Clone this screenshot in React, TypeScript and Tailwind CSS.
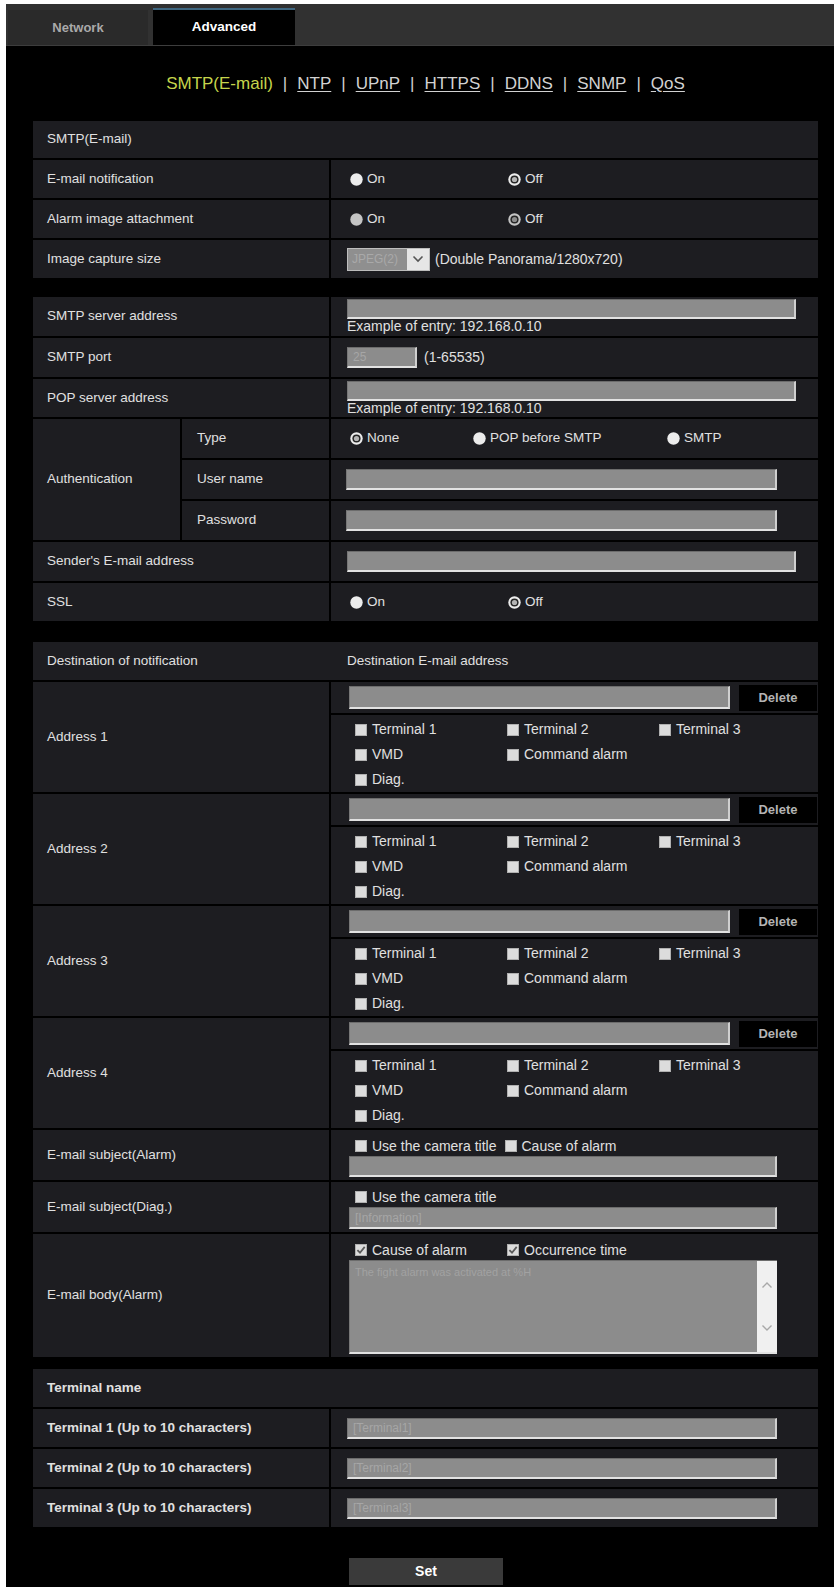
import React from "react";

const ROW = "bg-[#1d1d21]";

function Radio({ checked = false, dim = false }: { checked?: boolean; dim?: boolean }) {
  return (
    <svg width="13" height="13" viewBox="0 0 13 13" className="shrink-0">
      <circle cx="6.5" cy="6.5" r="6.2" fill={dim ? "#c4c4c4" : "#ececec"} />
      {checked && (
        <>
          <circle cx="6.5" cy="6.5" r="4.1" fill="#262626" />
          <circle cx="6.5" cy="6.5" r="2.6" fill={dim ? "#8c8c8c" : "#b4b4b4"} />
        </>
      )}
    </svg>
  );
}

function Check({ checked = false }: { checked?: boolean }) {
  return (
    <svg width="12" height="12" viewBox="0 0 12 12" className="shrink-0">
      <rect x="0.5" y="0.5" width="11" height="11" fill="#dcdcdc" stroke="#b0b0b0" />
      {checked && <path d="M2.4 6.1 L5 8.7 L9.7 2.9" fill="none" stroke="#5a5a5a" strokeWidth="1.8" />}
    </svg>
  );
}

function Field({ w, h = "h-[21px]", text }: { w: string; h?: string; text?: string }) {
  return (
    <div
      className={`${w} ${h} shrink-0 bg-[#8c8c8c] border-t border-l border-t-[#6c6c6c] border-l-[#777777] border-b-2 border-b-[#e2e2e2] border-r-2 border-r-[#cfcfcf] flex items-center pl-[5px] text-[12px] text-[#a6a6a6] overflow-hidden whitespace-nowrap`}
    >
      {text}
    </div>
  );
}

function RadioItem({ label, checked, dim, w }: { label: string; checked?: boolean; dim?: boolean; w?: string }) {
  return (
    <div className={`flex items-center gap-[4px] ${w ?? ""}`}>
      <Radio checked={checked} dim={dim} />
      <span className="text-[13.5px] text-[#e0e0e0]">{label}</span>
    </div>
  );
}

function CheckItem({ label, checked, w }: { label: string; checked?: boolean; w?: string }) {
  return (
    <div className={`flex items-center gap-[5px] ${w ?? ""}`}>
      <Check checked={checked} />
      <span className="text-[14px] text-[#e0e0e0] whitespace-nowrap">{label}</span>
    </div>
  );
}

function Row({
  label,
  h,
  bold,
  children,
  valueClass = "",
}: {
  label: string;
  h: string;
  bold?: boolean;
  children?: React.ReactNode;
  valueClass?: string;
}) {
  return (
    <div className={`flex gap-[2px] ${h}`}>
      <div
        className={`w-[296px] shrink-0 ${ROW} flex items-center pl-[14px] text-[#e0e0e0] ${bold ? "font-bold text-[13.5px]" : "text-[13.5px]"}`}
      >
        {label}
      </div>
      <div className={`flex-1 ${ROW} pl-[16px] ${valueClass}`}>{children}</div>
    </div>
  );
}

function Header({ left, right, h = "h-[37px]", bold }: { left: string; right?: string; h?: string; bold?: boolean }) {
  return (
    <div className={`flex ${h} ${ROW} items-center text-[13.5px] text-[#e0e0e0] ${bold ? "font-bold" : ""}`}>
      <div className="w-[298px] shrink-0 pl-[14px]">{left}</div>
      {right && <div className="pl-[16px]">{right}</div>}
    </div>
  );
}

function AddressBlock({ n }: { n: number }) {
  return (
    <div className="flex gap-[2px] h-[110px]">
      <div className={`w-[296px] shrink-0 ${ROW} flex items-center pl-[14px] text-[13.5px] text-[#e0e0e0]`}>
        Address {n}
      </div>
      <div className="flex-1 flex flex-col gap-[2px]">
        <div className={`h-[32px] ${ROW} flex items-center pl-[18px]`}>
          <Field w="w-[381px]" h="h-[23px]" />
          <div className="ml-[9px] w-[78px] h-[26px] bg-black flex items-center justify-center text-[13px] font-bold text-[#b4b4b4]">
            Delete
          </div>
        </div>
        <div className={`flex-1 ${ROW} pl-[24px] pt-[2px] flex flex-col`}>
          <div className="h-[25px] flex items-center">
            <CheckItem label="Terminal 1" w="w-[152px]" />
            <CheckItem label="Terminal 2" w="w-[152px]" />
            <CheckItem label="Terminal 3" />
          </div>
          <div className="h-[25px] flex items-center">
            <CheckItem label="VMD" w="w-[152px]" />
            <CheckItem label="Command alarm" />
          </div>
          <div className="h-[25px] flex items-center">
            <CheckItem label="Diag." />
          </div>
        </div>
      </div>
    </div>
  );
}

function Sep() {
  return <span className="mx-[10px] text-[#d0d0d0]">|</span>;
}

export default function App() {
  return (
    <div className="w-[834px] h-[1587px] overflow-hidden bg-white pt-[4px] pl-[6px] font-['Liberation_Sans',Arial,sans-serif]">
      <div className="h-full bg-black">
        {/* tab strip */}
        <div className="h-[42px] bg-[#313131] flex items-end border-b border-b-[#3d3d3d]">
          <div className="ml-[2px] w-[140px] h-[35px] bg-[#2a2a2a] flex items-center justify-center text-[13px] font-bold text-[#a9a9a9]">
            Network
          </div>
          <div className="ml-[5px] w-[142px] h-[37px] bg-black border-t-2 border-t-[#3e6680] flex items-center justify-center text-[13.5px] font-bold text-white">
            Advanced
          </div>
        </div>

        {/* sub navigation */}
        <div className="ml-[27px] w-[785px] h-[75px] flex items-center justify-center text-[17px] text-[#d2d2d2]">
          <span className="text-[#c6d54c]">SMTP(E-mail)</span>
          <Sep />
          <span className="underline underline-offset-2">NTP</span>
          <Sep />
          <span className="underline underline-offset-2">UPnP</span>
          <Sep />
          <span className="underline underline-offset-2">HTTPS</span>
          <Sep />
          <span className="underline underline-offset-2">DDNS</span>
          <Sep />
          <span className="underline underline-offset-2">SNMP</span>
          <Sep />
          <span className="underline underline-offset-2">QoS</span>
        </div>

        <div className="ml-[27px] w-[785px]">
          {/* SMTP basics */}
          <div className="flex flex-col gap-[2px]">
            <Header left="SMTP(E-mail)" />
            <Row label="E-mail notification" h="h-[38px]" valueClass="flex items-center pl-[19px]">
              <RadioItem label="On" w="w-[158px]" />
              <RadioItem label="Off" checked />
            </Row>
            <Row label="Alarm image attachment" h="h-[38px]" valueClass="flex items-center pl-[19px]">
              <RadioItem label="On" w="w-[158px]" dim />
              <RadioItem label="Off" checked dim />
            </Row>
            <Row label="Image capture size" h="h-[38px]" valueClass="flex items-center pl-[15px]">
              <div className="flex h-[23px] border border-[#bdbdbd]">
                <div className="w-[59px] bg-[#8f8f8f] flex items-center pl-[4px] text-[12px] text-[#a9a9a9]">JPEG(2)</div>
                <div className="w-[22px] bg-[#e6e6e6] flex items-center justify-center">
                  <svg width="12" height="8" viewBox="0 0 12 8">
                    <path d="M1.5 1.5 L6 6 L10.5 1.5" fill="none" stroke="#555" strokeWidth="1.6" />
                  </svg>
                </div>
              </div>
              <span className="ml-[5px] text-[14px] text-[#e0e0e0]">(Double Panorama/1280x720)</span>
            </Row>
          </div>

          {/* server settings */}
          <div className="mt-[19px] flex flex-col gap-[2px]">
            <Row label="SMTP server address" h="h-[39px]" valueClass="pl-[15px] pt-[2px] flex flex-col">
              <Field w="w-[449px]" h="h-[20px]" />
              <span className="text-[14px] leading-[16px] text-[#e0e0e0] mt-[-1px]">Example of entry: 192.168.0.10</span>
            </Row>
            <Row label="SMTP port" h="h-[39px]" valueClass="flex items-center pl-[15px]">
              <Field w="w-[70px]" text="25" />
              <span className="ml-[7px] text-[14px] text-[#e0e0e0]">(1-65535)</span>
            </Row>
            <Row label="POP server address" h="h-[38px]" valueClass="pl-[15px] pt-[2px] flex flex-col">
              <Field w="w-[449px]" h="h-[20px]" />
              <span className="text-[14px] leading-[16px] text-[#e0e0e0] mt-[-1px]">Example of entry: 192.168.0.10</span>
            </Row>

            <div className="flex gap-[2px] h-[121px]">
              <div className={`w-[147px] shrink-0 ${ROW} flex items-center pl-[14px] text-[13.5px] text-[#e0e0e0]`}>
                Authentication
              </div>
              <div className="flex-1 flex flex-col gap-[2px]">
                {[
                  { l: "Type", kind: "type" },
                  { l: "User name", kind: "field" },
                  { l: "Password", kind: "field" },
                ].map((r) => (
                  <div key={r.l} className="flex gap-[2px] h-[39px]">
                    <div className={`w-[147px] shrink-0 ${ROW} flex items-center pl-[15px] text-[13.5px] text-[#e0e0e0]`}>
                      {r.l}
                    </div>
                    {r.kind === "type" ? (
                      <div className={`flex-1 ${ROW} flex items-center pl-[19px]`}>
                        <RadioItem label="None" checked w="w-[123px]" />
                        <RadioItem label="POP before SMTP" w="w-[194px]" />
                        <RadioItem label="SMTP" />
                      </div>
                    ) : (
                      <div className={`flex-1 ${ROW} flex items-center pl-[15px]`}>
                        <Field w="w-[431px]" />
                      </div>
                    )}
                  </div>
                ))}
              </div>
            </div>

            <Row label="Sender's E-mail address" h="h-[39px]" valueClass="flex items-center pl-[15px]">
              <Field w="w-[449px]" />
            </Row>
            <Row label="SSL" h="h-[38px]" valueClass="flex items-center pl-[19px]">
              <RadioItem label="On" w="w-[158px]" />
              <RadioItem label="Off" checked />
            </Row>
          </div>

          {/* destinations */}
          <div className="mt-[21px] flex flex-col gap-[2px]">
            <Header left="Destination of notification" right="Destination E-mail address" h="h-[38px]" />
            <AddressBlock n={1} />
            <AddressBlock n={2} />
            <AddressBlock n={3} />
            <AddressBlock n={4} />
            <Row label="E-mail subject(Alarm)" h="h-[50px]" valueClass="pl-[18px] pt-[6px] flex flex-col">
              <div className="h-[20px] flex items-center pl-[6px] gap-[8px]">
                <CheckItem label="Use the camera title" />
                <CheckItem label="Cause of alarm" />
              </div>
              <Field w="w-[428px]" />
            </Row>
            <Row label="E-mail subject(Diag.)" h="h-[50px]" valueClass="pl-[18px] pt-[5px] flex flex-col">
              <div className="h-[20px] flex items-center pl-[6px]">
                <CheckItem label="Use the camera title" />
              </div>
              <Field w="w-[428px]" h="h-[22px]" text="[Information]" />
            </Row>
            <Row label="E-mail body(Alarm)" h="h-[123px]" valueClass="pl-[18px] pt-[6px] flex flex-col">
              <div className="h-[20px] flex items-center pl-[6px]">
                <CheckItem label="Cause of alarm" checked w="w-[152px]" />
                <CheckItem label="Occurrence time" checked />
              </div>
              <div className="w-[428px] h-[94px] flex bg-[#8c8c8c] border-t border-l border-t-[#6c6c6c] border-l-[#777777] border-b-2 border-b-[#e2e2e2]">
                <div className="flex-1 pl-[5px] pt-[3px] text-[11px] text-[#a2a2a2]">
                  The fight alarm was activated at %H
                </div>
                <div className="w-[20px] bg-[#f0f0f0] flex flex-col items-center justify-between py-[20px]">
                  <svg width="12" height="8" viewBox="0 0 12 8">
                    <path d="M1.5 6.5 L6 2 L10.5 6.5" fill="none" stroke="#a8a8a8" strokeWidth="1.4" />
                  </svg>
                  <svg width="12" height="8" viewBox="0 0 12 8">
                    <path d="M1.5 1.5 L6 6 L10.5 1.5" fill="none" stroke="#a8a8a8" strokeWidth="1.4" />
                  </svg>
                </div>
              </div>
            </Row>
          </div>

          {/* terminal names */}
          <div className="mt-[12px] flex flex-col gap-[2px]">
            <Header left="Terminal name" h="h-[38px]" bold />
            {[1, 2, 3].map((n) => (
              <Row key={n} label={`Terminal ${n} (Up to 10 characters)`} h="h-[38px]" bold valueClass="flex items-center pl-[16px]">
                <Field w="w-[430px]" text={`[Terminal${n}]`} />
              </Row>
            ))}
          </div>

          <div className="mt-[31px] ml-[316px] w-[154px] h-[27px] bg-[#3a3a3a] flex items-center justify-center text-[14px] font-bold text-white">
            Set
          </div>
        </div>
      </div>
    </div>
  );
}
